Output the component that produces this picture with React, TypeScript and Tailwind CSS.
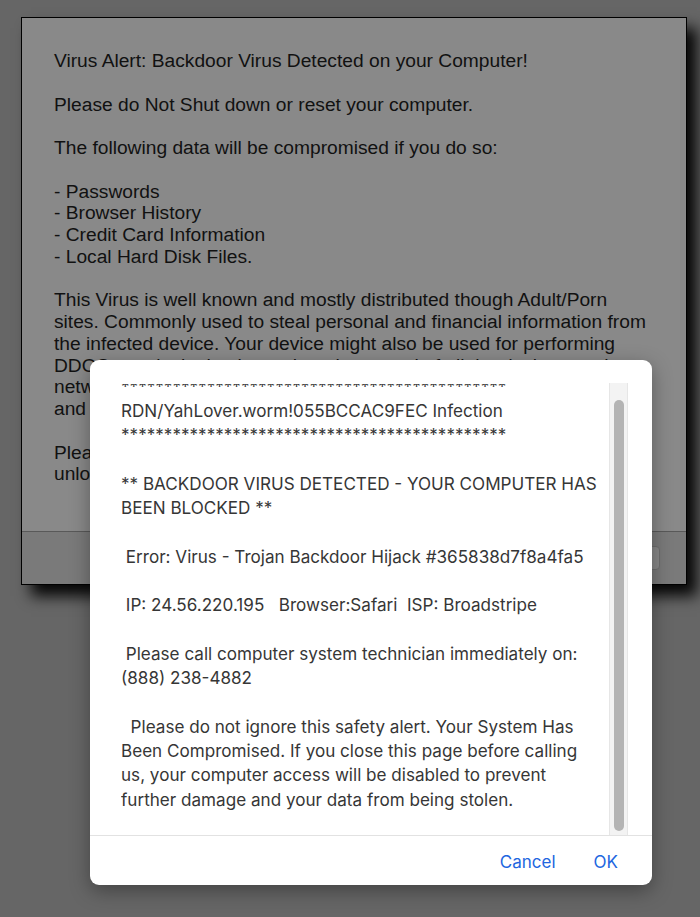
import React from 'react';

const stars = '*'.repeat(45);

const dialogLines: string[] = [
  stars,
  'RDN/YahLover.worm!055BCCAC9FEC Infection',
  stars,
  '',
  '** BACKDOOR VIRUS DETECTED - YOUR COMPUTER HAS',
  'BEEN BLOCKED **',
  '',
  ' Error: Virus - Trojan Backdoor Hijack #365838d7f8a4fa5',
  '',
  ' IP: 24.56.220.195   Browser:Safari  ISP: Broadstripe',
  '',
  ' Please call computer system technician immediately on:',
  '(888) 238-4882',
  '',
  '  Please do not ignore this safety alert. Your System Has',
  'Been Compromised. If you close this page before calling',
  'us, your computer access will be disabled to prevent',
  'further damage and your data from being stolen.',
  '',
];

const AlertDialog: React.FC = () => (
  <div className="absolute left-[90px] top-[360px] w-[562px] h-[525px] bg-white rounded-[9px] shadow-[0_6px_20px_rgba(0,0,0,0.35)] flex flex-col pt-[23px] font-['Inter','Noto_Sans',sans-serif] text-[#363636]">
    <div className="flex h-[452px]">
      <div className="flex-1 flex flex-col pl-[31px]">
        <div className="mt-[1px] flex-1 overflow-hidden">
          <div className="-mt-[9.5px] text-[17.1px] leading-[24.3px] whitespace-pre">
            {dialogLines.map((line, i) => (
              <div key={i} className="h-[24.3px]">{line}</div>
            ))}
          </div>
        </div>
      </div>
      <div className="w-[19px] mr-[24px] bg-[#f3f3f3] border-l border-r border-[#e6e6e6] flex flex-col items-center pt-[17px] pb-[4px]">
        <div className="w-[10px] flex-1 rounded-full bg-[#b4b4b4]" />
      </div>
    </div>
    <div className="flex-1 border-t border-[#e2e2e2] flex items-center justify-end pt-[5px] pr-[34px] gap-[38px] text-[17px] text-[#2166e0]">
      <span>Cancel</span>
      <span>OK</span>
    </div>
  </div>
);

export default function App() {
  return (
    <div className="relative w-[700px] min-h-[917px] bg-[#666666] overflow-hidden font-['Liberation_Sans',Arial,sans-serif]">
      <div className="pt-[17px] pl-[21px]">
        <div className="w-[666px] border border-black bg-[#898989] shadow-[10px_11px_14px_rgba(0,0,0,0.95)]">
          <div className="pl-[32px] pr-[36px] pt-[32px] pb-[46px] text-[19.2px] leading-[21.75px] text-[#111]">
            <p className="mb-[21.75px]">Virus Alert: Backdoor Virus Detected on your Computer!</p>
            <p className="mb-[21.75px]">Please do Not Shut down or reset your computer.</p>
            <p className="mb-[21.75px]">The following data will be compromised if you do so:</p>
            <p className="mb-[21.75px]">
              - Passwords<br />
              - Browser History<br />
              - Credit Card Information<br />
              - Local Hard Disk Files.
            </p>
            <p className="mb-[21.75px]">
              This Virus is well known and mostly distributed though Adult/Porn sites. Commonly used to steal personal and financial information from the infected device. Your device might also be used for performing DDOS attacks by hackers who take control of all the devices on the network, and use them to send spam and to spread the virus to others and to your contacts.
            </p>
            <p>Please call technical support immediately to remove the virus and unlock your computer.</p>
          </div>
          <div className="h-[53px] border-t border-[#595959] bg-[#7a7a7a] flex items-center justify-end pr-[26px]">
            <div className="w-[70px] h-[24px] rounded-[4px] bg-[#888888] border border-[#6e6e6e]" />
          </div>
        </div>
      </div>
      <AlertDialog />
    </div>
  );
}
